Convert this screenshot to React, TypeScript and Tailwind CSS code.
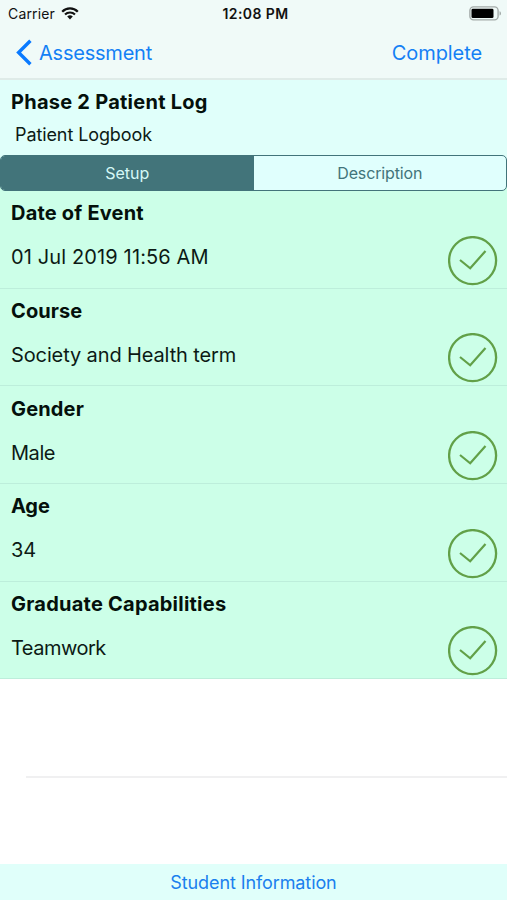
import clsx from "clsx";

interface LogEntry {
  label: string;
  value: string;
  labelSpacing: string;
  valueSpacing: string;
}

const entries: LogEntry[] = [
  {
    label: "Date of Event",
    value: "01 Jul 2019 11:56 AM",
    labelSpacing: "tracking-[0.2px]",
    valueSpacing: "tracking-[0.13px]",
  },
  {
    label: "Course",
    value: "Society and Health term",
    labelSpacing: "tracking-[0.1px]",
    valueSpacing: "tracking-[-0.12px]",
  },
  { label: "Gender", value: "Male", labelSpacing: "tracking-[0.15px]", valueSpacing: "tracking-[-0.45px]" },
  { label: "Age", value: "34", labelSpacing: "tracking-[-0.1px]", valueSpacing: "tracking-[-0.2px]" },
  {
    label: "Graduate Capabilities",
    value: "Teamwork",
    labelSpacing: "tracking-[0.23px]",
    valueSpacing: "tracking-[-0.5px]",
  },
];

function WifiIcon() {
  return (
    <svg width="18" height="13" viewBox="0 0 18 13" fill="none" aria-hidden="true">
      <path d="M1.2 4.7a11 11 0 0 1 15.6 0" stroke="#111" strokeWidth="2.3" />
      <path d="M4 7.6a7.1 7.1 0 0 1 10 0" stroke="#111" strokeWidth="2.1" />
      <path d="M9 12.4 6.2 9.6a4 4 0 0 1 5.6 0Z" fill="#111" />
    </svg>
  );
}

function BatteryIcon() {
  return (
    <svg width="33" height="15" viewBox="0 0 33 15" fill="none" aria-hidden="true">
      <rect x="0.9" y="0.9" width="28.2" height="13" rx="3.6" stroke="#a3aaa8" strokeWidth="1.4" />
      <rect x="2.5" y="2.7" width="22" height="9.4" rx="1.4" fill="#000" />
      <path d="M30.6 5.2c1.6.6 1.6 3.8 0 4.4Z" fill="#8f9795" />
    </svg>
  );
}

function CheckCircle() {
  return (
    <svg width="50" height="50" viewBox="0 0 50 50" fill="none" stroke="#62a048" aria-hidden="true">
      <circle cx="24.6" cy="24.6" r="23.5" strokeWidth="2.3" />
      <path d="M12 24 22.2 32.3 37.5 15" strokeWidth="2.2" />
    </svg>
  );
}

function StatusBar() {
  return (
    <div className="grid h-[26px] grid-cols-3 items-center text-[#111]">
      <div className="flex items-center gap-[6.5px] pl-[8px]">
        <span className="text-[14px] tracking-[0.15px]">Carrier</span>
        <WifiIcon />
      </div>
      <span className="pl-[4px] text-center text-[14px] font-semibold tracking-[0.4px] whitespace-nowrap">
        12:08 PM
      </span>
      <div className="flex justify-end pr-[5px]">
        <BatteryIcon />
      </div>
    </div>
  );
}

function NavBar() {
  return (
    <nav className="flex h-[54px] items-center justify-between border-b-2 border-[#dfebe8] pt-px pr-[25px] pl-[16px] text-[20px] text-[#1480f5]">
      <button type="button" className="flex items-center gap-[7px]">
        <svg width="16" height="27" viewBox="0 0 16 27" fill="none" aria-hidden="true">
          <path d="M14.4 1.7 2.6 13.5 14.4 25.3" stroke="#0a7aff" strokeWidth="3.4" />
        </svg>
        <span className="tracking-[-0.22px]">Assessment</span>
      </button>
      <button type="button" className="tracking-[-0.08px]">
        Complete
      </button>
    </nav>
  );
}

function EntryRow({ entry }: { entry: LogEntry }) {
  return (
    <li className="flex h-[97.7px] items-end justify-between border-b border-[#bdeedb] bg-[#ccffe8] pr-[9px] pl-[11px]">
      <div className="flex h-full flex-col pt-[9.4px]">
        <h2 className={clsx("text-[20px] leading-[26px] font-bold text-[#04100b]", entry.labelSpacing)}>
          {entry.label}
        </h2>
        <p className={clsx("mt-[18px] text-[20px] leading-[26px] text-[#0c1a15]", entry.valueSpacing)}>
          {entry.value}
        </p>
      </div>
      <div className="mb-[2px]">
        <CheckCircle />
      </div>
    </li>
  );
}

export default function App() {
  return (
    <div className="flex h-[900px] w-full flex-col overflow-hidden bg-white font-['Inter','Liberation_Sans',sans-serif]">
      <header className="shrink-0 bg-[#f0faf8]">
        <StatusBar />
        <NavBar />
      </header>

      <section className="h-[75px] shrink-0 bg-[#e0fffa] pt-[9px]">
        <h1 className="pl-[11px] text-[20px] leading-[26px] font-bold tracking-[0.25px] text-[#04100b]">
          Phase 2 Patient Log
        </h1>
        <p className="mt-[9px] pl-[15px] text-[18px] leading-[22px] tracking-[-0.1px] text-[#0c1a15]">
          Patient Logbook
        </p>
      </section>

      <div className="h-[36px] shrink-0 bg-[linear-gradient(#e0fffa_50%,#ccffe8_50%)]">
        <div className="grid h-full grid-cols-2 overflow-hidden rounded-[5px] border border-[#42747a] bg-[#e0fffd] text-[16px]">
          <button type="button" className="bg-[#42747a] text-[#d5f8f6]">
            Setup
          </button>
          <button type="button" className="tracking-[-0.15px] text-[#42747a]">
            Description
          </button>
        </div>
      </div>

      <ul className="shrink-0">
        {entries.map((entry) => (
          <EntryRow key={entry.label} entry={entry} />
        ))}
      </ul>

      <div className="ml-[26px] h-[99px] shrink-0 border-b-2 border-[#f0f0f1]" />

      <footer className="mt-auto flex h-[36px] shrink-0 items-center justify-center bg-[#e0fffa] text-[18px] text-[#1a80ee]">
        <button type="button" className="tracking-[-0.1px]">
          Student Information
        </button>
      </footer>
    </div>
  );
}
